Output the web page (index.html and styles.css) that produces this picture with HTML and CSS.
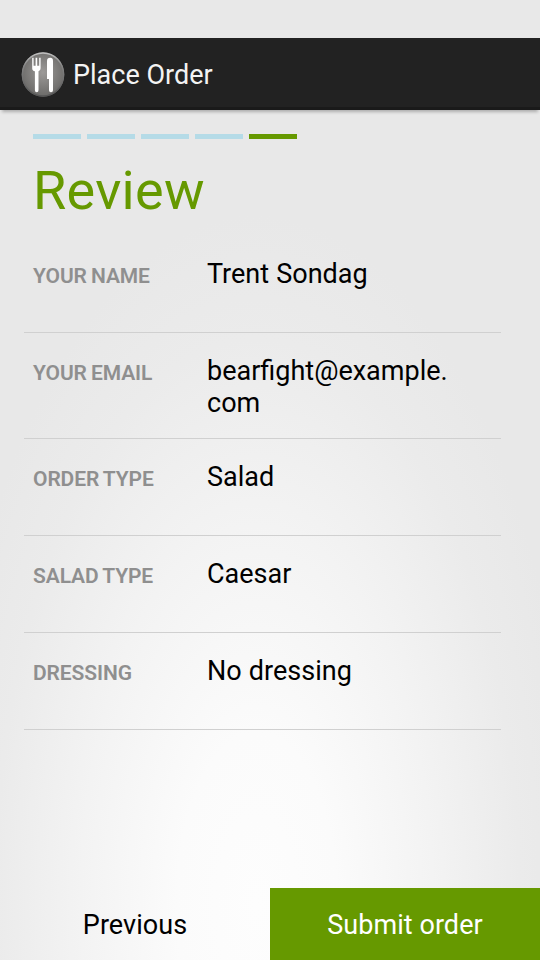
FILE: index.html
```html
<!DOCTYPE html>
<html lang="en">
<head>
<meta charset="utf-8">
<title>Place Order</title>
<link rel="stylesheet" href="styles.css">
</head>
<body>
<header class="action-bar">
  <svg class="logo" width="48" height="48" viewBox="0 0 48 48" aria-hidden="true">
    <defs>
      <radialGradient id="disc" cx=".5" cy=".45" r=".58">
        <stop offset="0" stop-color="#9c9a98"/>
        <stop offset="1" stop-color="#686765"/>
      </radialGradient>
      <linearGradient id="rim" x1="0" y1="0" x2="0" y2="1">
        <stop offset="0" stop-color="#c0c0c0"/>
        <stop offset=".3" stop-color="#858585"/>
        <stop offset="1" stop-color="#555"/>
      </linearGradient>
    </defs>
    <ellipse cx="24" cy="24.5" rx="21.3" ry="22.2" fill="url(#disc)"/>
    <ellipse cx="24" cy="24.5" rx="20.6" ry="21.5" fill="none" stroke="url(#rim)" stroke-width="1.4"/>
    <path fill="#fff" d="M13.2 7.8h1.4v8h2v-8h1.6v8h2v-8h1.4v10.4q0 2.7-2.1 3.1v19q0 2-1.8 2t-1.8-2v-19q-2.7-.4-2.7-3.1z"/>
    <path fill="#fff" d="M28 29V11q0-3.3 3.3-3.3 2.7 0 2.7 3.3v29.3q0 2-2 2t-2-2V29z"/>
  </svg>
  <span class="action-title">Place Order</span>
</header>
<main class="page">
  <div class="steps">
    <i class="step"></i><i class="step"></i><i class="step"></i><i class="step"></i><i class="step current"></i>
  </div>
  <h1 class="title">Review</h1>
  <dl class="review">
    <div class="row"><dt>YOUR NAME</dt><dd>Trent Sondag</dd></div>
    <div class="row"><dt>YOUR EMAIL</dt><dd>bearfight@example.<wbr>com</dd></div>
    <div class="row"><dt>ORDER TYPE</dt><dd>Salad</dd></div>
    <div class="row"><dt>SALAD TYPE</dt><dd>Caesar</dd></div>
    <div class="row"><dt>DRESSING</dt><dd>No dressing</dd></div>
  </dl>
</main>
<footer class="buttons">
  <button class="button">Previous</button>
  <button class="button primary">Submit order</button>
</footer>
</body>
</html>
```
FILE: styles.css
```css
* { box-sizing: border-box; }

body {
  margin: 0;
  height: 960px;
  padding-top: 38px;
  display: flex;
  flex-direction: column;
  overflow: hidden;
  font-family: Roboto, sans-serif;
  color: #000;
  background: radial-gradient(ellipse 320px 690px at 257px 905px, #fdfdfd 0%, #fbfbfb 25%, #f3f3f3 55%, #ebebeb 82%, #e8e8e8 100%);
}

.action-bar {
  flex: none;
  height: 72px;
  padding-left: 19px;
  display: flex;
  align-items: center;
  gap: 6px;
  background: #222;
  border-bottom: 3px solid #1a1a1a;
  box-shadow: 0 4px 3px -2px rgba(0, 0, 0, .25);
}

.logo { margin-top: 2px; }

.action-title {
  font-size: 27px;
  line-height: 32px;
  color: #f3f3f3;
  padding-top: 4px;
}

.page {
  flex: 1;
  padding: 24px 39px 0 24px;
}

.steps {
  display: flex;
  gap: 6px;
  padding-left: 9px;
}

.step {
  width: 48px;
  height: 5px;
  background: #b5dbe7;
}

.step.current { background: #690; }

.title {
  margin: 0;
  height: 97px;
  padding: 20px 0 0 9px;
  font-size: 54px;
  font-weight: 400;
  line-height: 64px;
  letter-spacing: .3px;
  color: #690;
}

.review { margin: 0; }

.row {
  min-height: 97px;
  padding: 22px 9px 19px;
  display: flex;
  border-bottom: 1px solid #d0d0d0;
}

.row dt {
  flex: none;
  width: 174px;
  padding-top: 6px;
  font-size: 21px;
  font-weight: 600;
  line-height: 25px;
  letter-spacing: -.1px;
  word-spacing: -1px;
  color: #8f8f8f;
}

.row dd {
  margin: 0;
  font-size: 27px;
  line-height: 32px;
  word-spacing: .5px;
}

.buttons {
  flex: none;
  height: 72px;
  display: flex;
}

.button {
  flex: 1;
  border: 0;
  padding: 2px 0 0;
  background: none;
  font: 27px/32px Roboto, sans-serif;
  letter-spacing: .05px;
  color: #000;
}

.button.primary {
  background: #690;
  color: #fff;
}
```
